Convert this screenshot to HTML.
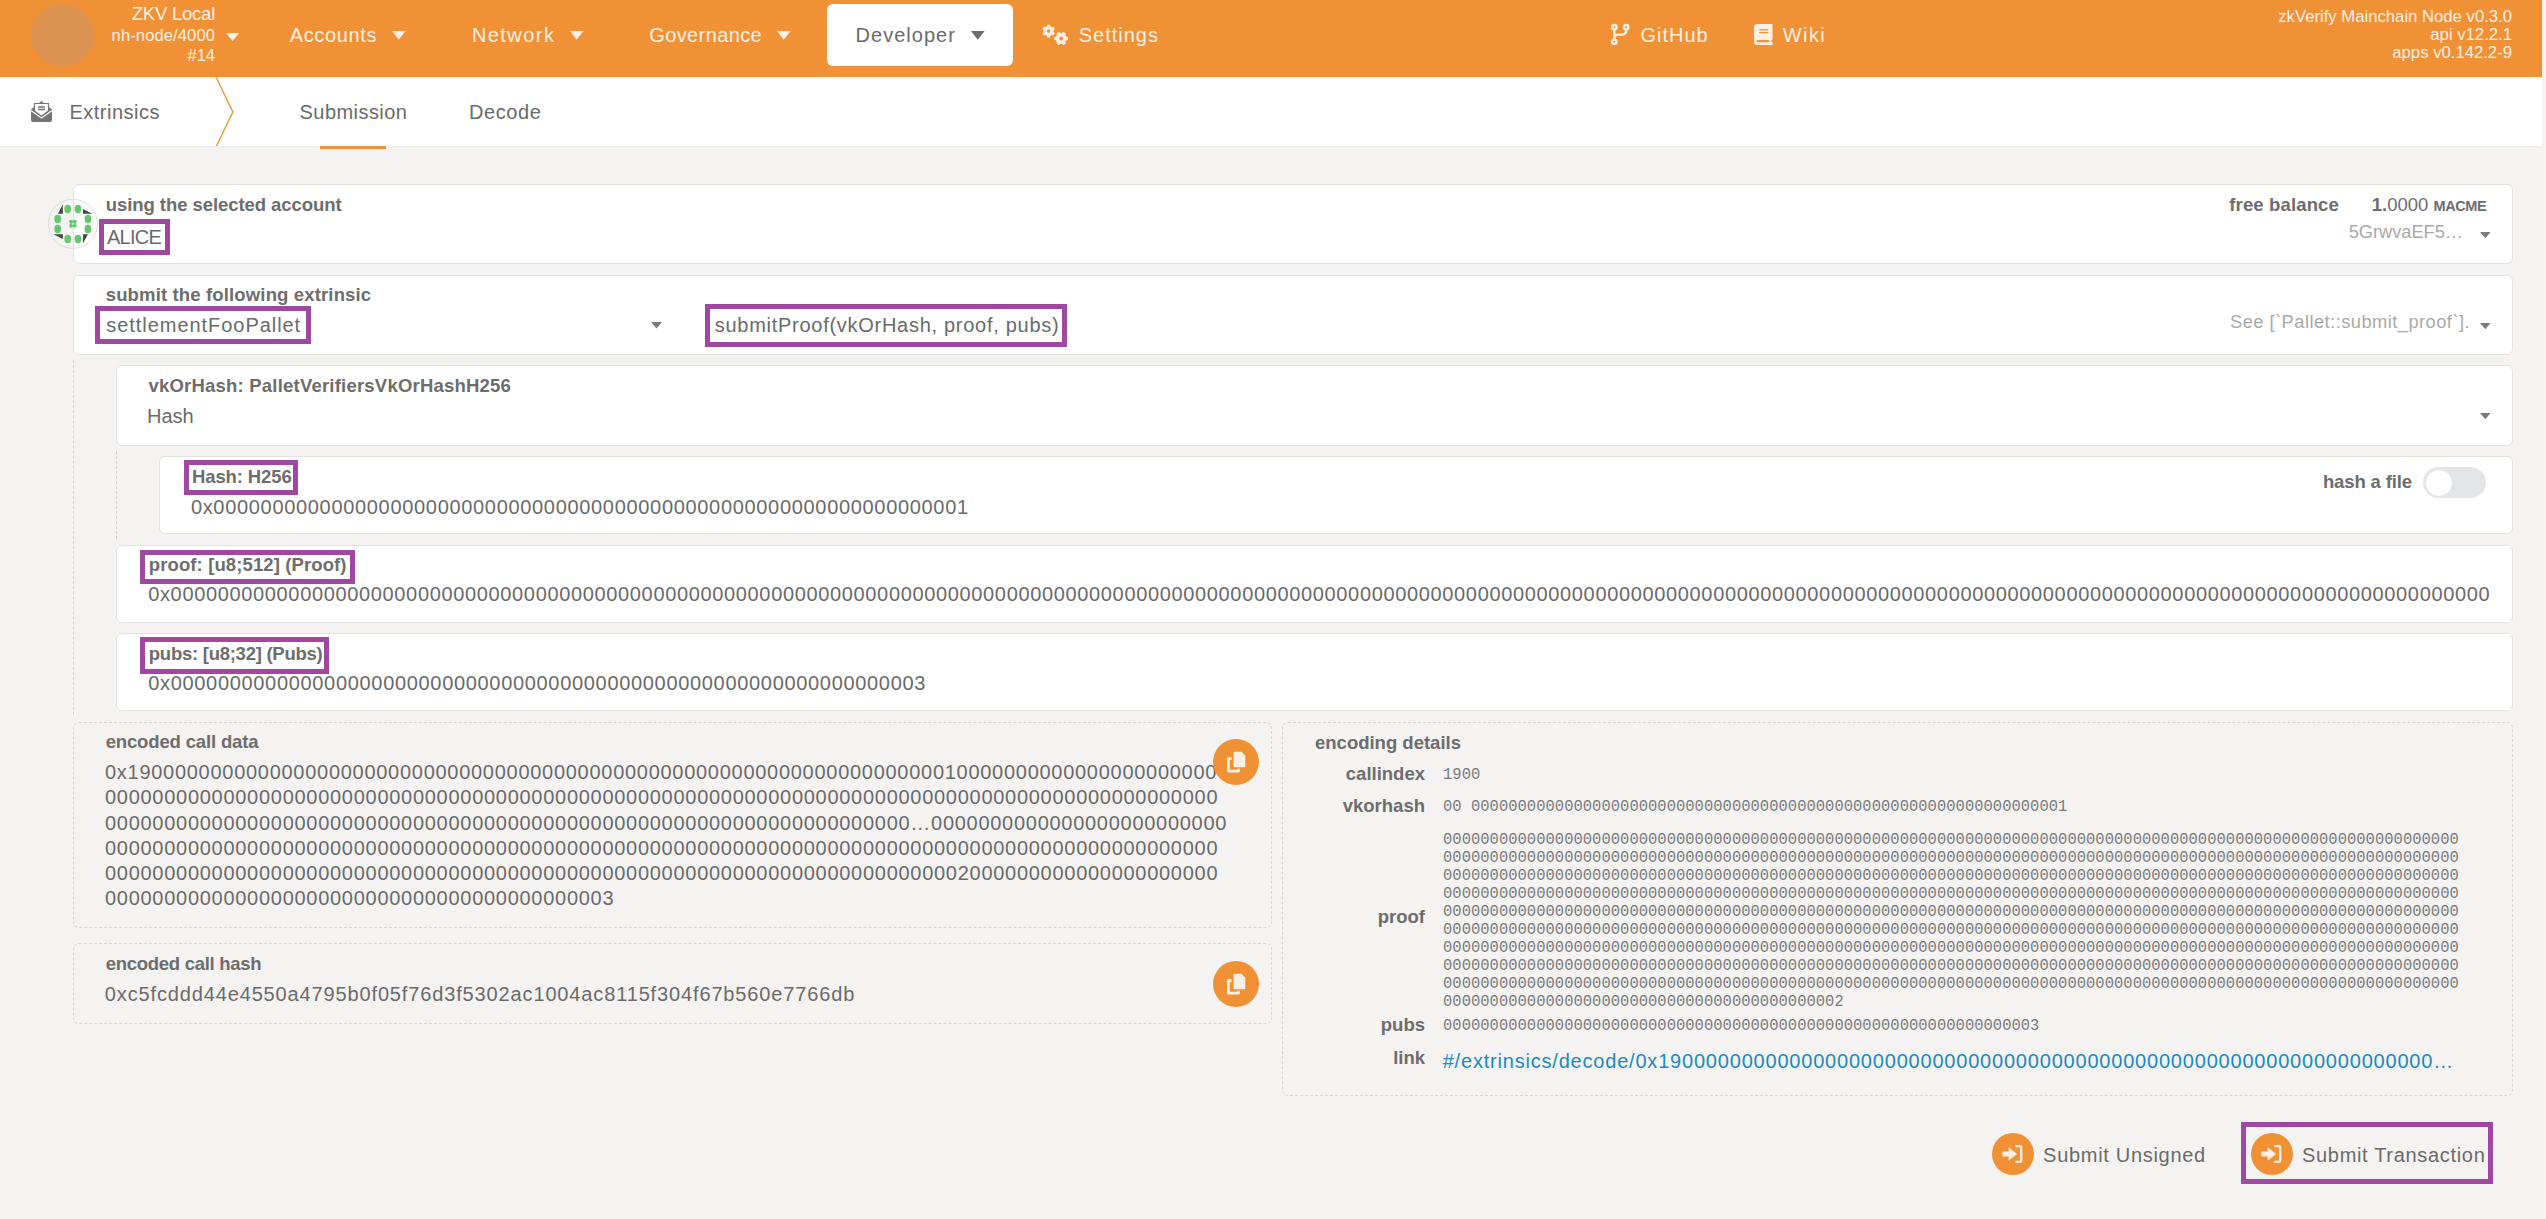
<!DOCTYPE html>
<html><head><meta charset="utf-8"><title>Extrinsics</title><style>
html,body{margin:0;padding:0}
body{width:2546px;height:1219px;position:relative;overflow:hidden;background:#f4f3f2;font-family:"Liberation Sans",sans-serif}
.t{position:absolute;white-space:pre;line-height:1}
</style></head><body>
<div style="position:absolute;left:0px;top:0px;width:2542px;height:77px;box-sizing:border-box;background:#f09135"></div>
<div style="position:absolute;left:2542px;top:0px;width:4px;height:1219px;box-sizing:border-box;background:#f4f3f2"></div>
<div style="position:absolute;left:31px;top:4px;width:63px;height:63px;box-sizing:border-box;background:#dd9453;border-radius:50%"></div>
<div class="t" style="right:2331.00px;top:5.24px;font-size:18.5px;color:#fdefe3;font-weight:400;letter-spacing:-0.24px;font-family:'Liberation Sans',sans-serif;">ZKV Local</div>
<div class="t" style="right:2331.00px;top:26.93px;font-size:16.5px;color:#fdefe3;font-weight:400;letter-spacing:0.13px;font-family:'Liberation Sans',sans-serif;">nh-node/4000</div>
<div class="t" style="right:2331.00px;top:46.93px;font-size:16.5px;color:#fdefe3;font-weight:400;font-family:'Liberation Sans',sans-serif;">#14</div>
<svg style="position:absolute;left:224.8px;top:31.9px" width="15.2" height="10" viewBox="224.8 31.9 15.2 10"><polygon points="225.8,32.9 239.0,32.9 232.4,40.9" fill="#fdefe3"/></svg>
<div class="t" style="left:289.70px;top:24.57px;font-size:20px;color:#fdefe3;font-weight:400;letter-spacing:0.64px;font-family:'Liberation Sans',sans-serif;">Accounts</div>
<svg style="position:absolute;left:390.5px;top:30.4px" width="15.5" height="10.8" viewBox="390.5 30.4 15.5 10.8"><polygon points="391.5,31.4 405.0,31.4 398.25,40.2" fill="#fdefe3"/></svg>
<div class="t" style="left:471.90px;top:24.57px;font-size:20px;color:#fdefe3;font-weight:400;letter-spacing:1.45px;font-family:'Liberation Sans',sans-serif;">Network</div>
<svg style="position:absolute;left:568.5px;top:30.4px" width="15.5" height="10.8" viewBox="568.5 30.4 15.5 10.8"><polygon points="569.5,31.4 583.0,31.4 576.25,40.2" fill="#fdefe3"/></svg>
<div class="t" style="left:649.30px;top:24.57px;font-size:20px;color:#fdefe3;font-weight:400;letter-spacing:0.38px;font-family:'Liberation Sans',sans-serif;">Governance</div>
<svg style="position:absolute;left:776px;top:30.4px" width="15.5" height="10.8" viewBox="776 30.4 15.5 10.8"><polygon points="777,31.4 790.5,31.4 783.75,40.2" fill="#fdefe3"/></svg>
<div style="position:absolute;left:827px;top:4px;width:186px;height:62px;box-sizing:border-box;background:#fff;border-radius:6px"></div>
<div class="t" style="left:855.60px;top:24.57px;font-size:20px;color:#6a6a6a;font-weight:400;letter-spacing:1.02px;font-family:'Liberation Sans',sans-serif;">Developer</div>
<svg style="position:absolute;left:969.8px;top:30.4px" width="15.6" height="10.8" viewBox="969.8 30.4 15.6 10.8"><polygon points="970.8,31.4 984.4,31.4 977.5999999999999,40.2" fill="#6b6b6b"/></svg>
<svg style="position:absolute;left:1036px;top:18px" width="40" height="32" viewBox="1036 18 40 32"><path fill-rule="evenodd" fill="#fdefe3" d="M1046.10 26.77 L1046.97 26.37 L1047.23 24.64 L1049.97 24.64 L1050.23 26.37 L1051.10 26.77 L1051.88 27.33 L1053.50 26.68 L1054.88 29.06 L1053.51 30.15 L1053.60 31.10 L1053.51 32.05 L1054.88 33.14 L1053.50 35.52 L1051.88 34.87 L1051.10 35.43 L1050.23 35.83 L1049.97 37.56 L1047.23 37.56 L1046.97 35.83 L1046.10 35.43 L1045.32 34.87 L1043.70 35.52 L1042.32 33.14 L1043.69 32.05 L1043.60 31.10 L1043.69 30.15 L1042.32 29.06 L1043.70 26.68 L1045.32 27.33Z M1050.40 31.10 A1.8 1.8 0 1 0 1046.80 31.10 A1.8 1.8 0 1 0 1050.40 31.10Z M1061.10 33.10 L1062.13 33.20 L1063.26 31.84 L1065.78 33.30 L1065.18 34.96 L1065.78 35.80 L1066.21 36.74 L1067.95 37.04 L1067.95 39.96 L1066.21 40.26 L1065.78 41.20 L1065.18 42.04 L1065.78 43.70 L1063.26 45.16 L1062.13 43.80 L1061.10 43.90 L1060.07 43.80 L1058.94 45.16 L1056.42 43.70 L1057.02 42.04 L1056.42 41.20 L1055.99 40.26 L1054.25 39.96 L1054.25 37.04 L1055.99 36.74 L1056.42 35.80 L1057.02 34.96 L1056.42 33.30 L1058.94 31.84 L1060.07 33.20Z M1063.00 38.50 A1.9 1.9 0 1 0 1059.20 38.50 A1.9 1.9 0 1 0 1063.00 38.50Z"/></svg>
<div class="t" style="left:1078.70px;top:24.57px;font-size:20px;color:#fdefe3;font-weight:400;letter-spacing:1.0px;font-family:'Liberation Sans',sans-serif;">Settings</div>
<svg style="position:absolute;left:1604px;top:18px" width="40" height="32" viewBox="1604 18 40 32"><g fill="none" stroke="#fdefe3" stroke-width="2.3"><circle cx="1614.4" cy="27.2" r="2.2"/><circle cx="1626.2" cy="27.2" r="2.2"/><circle cx="1614.4" cy="41.75" r="2.2"/><path d="M1614.4 29.5 V39.5 M1626.2 29.5 V30.5 Q1626.2 34.6 1621 34.6 H1619 Q1614.4 34.6 1614.4 38"/></g></svg>
<div class="t" style="left:1640.50px;top:24.57px;font-size:20px;color:#fdefe3;font-weight:400;letter-spacing:1.0px;font-family:'Liberation Sans',sans-serif;">GitHub</div>
<svg style="position:absolute;left:1746px;top:18px" width="40" height="32" viewBox="1746 18 40 32"><path fill="#fdefe3" d="M1757.5 23.9 H1772.5 V39.5 L1771.2 41.1 L1772.5 42.6 V44.9 H1757.5 A3.5 3.5 0 0 1 1754 41.4 V27.4 A3.5 3.5 0 0 1 1757.5 23.9Z"/><g stroke="#f09135" stroke-linecap="round"><path d="M1759.6 29.8 H1767.8 M1759.6 32.6 H1767.8" stroke-width="1.3"/><path d="M1757.6 41.1 H1768.2" stroke-width="2.3"/></g></svg>
<div class="t" style="left:1782.70px;top:24.57px;font-size:20px;color:#fdefe3;font-weight:400;letter-spacing:1.45px;font-family:'Liberation Sans',sans-serif;">Wiki</div>
<div class="t" style="right:34.00px;top:9.26px;font-size:16.7px;color:#fdefe3;font-weight:400;font-family:'Liberation Sans',sans-serif;">zkVerify Mainchain Node v0.3.0</div>
<div class="t" style="right:34.00px;top:27.06px;font-size:16.7px;color:#fdefe3;font-weight:400;font-family:'Liberation Sans',sans-serif;">api v12.2.1</div>
<div class="t" style="right:34.00px;top:45.06px;font-size:16.7px;color:#fdefe3;font-weight:400;font-family:'Liberation Sans',sans-serif;">apps v0.142.2-9</div>
<div style="position:absolute;left:0px;top:77px;width:2542px;height:69px;box-sizing:border-box;background:#fff"></div>
<svg style="position:absolute;left:31px;top:101px" width="21" height="21" viewBox="31 101 21 21"><path d="M10.5 0 L13 2 H18 V6 L21 8.5 V19 A2 2 0 0 1 19 21 H2 A2 2 0 0 1 0 19 V8.5 L3 6 V2 H8Z" fill="#747474" transform="translate(31 101)"/><path d="M4 3 H17 V9.5 L10.5 14.5 L4 9.5Z" fill="#fff" transform="translate(31 101)"/><path d="M0 9.5 L10.5 17 L21 9.5" fill="none" stroke="#fff" stroke-width="1.2" transform="translate(31 101)"/><path d="M7 6 H14 M7 8.5 H14" stroke="#747474" stroke-width="1.3" transform="translate(31 101)"/></svg>
<div class="t" style="left:69.40px;top:102.17px;font-size:20px;color:#6a6a6a;font-weight:400;letter-spacing:0.5px;font-family:'Liberation Sans',sans-serif;">Extrinsics</div>
<svg style="position:absolute;left:212px;top:77px" width="24" height="70" viewBox="212 77 24 70"><polyline points="216,77 232.8,112 216,147" fill="none" stroke="#f09135" stroke-width="1.3"/></svg>
<div class="t" style="left:299.60px;top:102.17px;font-size:20px;color:#6a6a6a;font-weight:400;letter-spacing:0.44px;font-family:'Liberation Sans',sans-serif;">Submission</div>
<div style="position:absolute;left:0px;top:146px;width:2542px;height:1px;box-sizing:border-box;background:#efeeed"></div>
<div style="position:absolute;left:320px;top:146px;width:66px;height:3px;box-sizing:border-box;background:#f09135"></div>
<div class="t" style="left:469.00px;top:102.17px;font-size:20px;color:#6a6a6a;font-weight:400;letter-spacing:0.58px;font-family:'Liberation Sans',sans-serif;">Decode</div>
<div style="position:absolute;left:73px;top:184px;width:2440px;height:80px;box-sizing:border-box;background:#fff;border:1px solid #e3e2e1;border-radius:6px"></div>
<div style="position:absolute;left:73px;top:275px;width:2440px;height:80px;box-sizing:border-box;background:#fff;border:1px solid #e3e2e1;border-radius:6px"></div>
<div style="position:absolute;left:73px;top:360px;width:1px;height:355px;box-sizing:border-box;border-left:1px dashed #d6d5d4"></div>
<div style="position:absolute;left:116px;top:365px;width:2397px;height:81px;box-sizing:border-box;background:#fff;border:1px solid #e3e2e1;border-radius:6px"></div>
<div style="position:absolute;left:116px;top:451px;width:1px;height:88px;box-sizing:border-box;border-left:1px dashed #d6d5d4"></div>
<div style="position:absolute;left:159px;top:456px;width:2354px;height:78px;box-sizing:border-box;background:#fff;border:1px solid #e3e2e1;border-radius:6px"></div>
<div style="position:absolute;left:116px;top:545px;width:2397px;height:78px;box-sizing:border-box;background:#fff;border:1px solid #e3e2e1;border-radius:6px"></div>
<div style="position:absolute;left:116px;top:633px;width:2397px;height:78px;box-sizing:border-box;background:#fff;border:1px solid #e3e2e1;border-radius:6px"></div>
<div class="t" style="left:105.70px;top:195.54px;font-size:18.5px;color:#6d6d6d;font-weight:700;letter-spacing:-0.06px;font-family:'Liberation Sans',sans-serif;">using the selected account</div>
<div class="t" style="left:107.00px;top:227.27px;font-size:20px;color:#6a6a6a;font-weight:400;letter-spacing:-0.75px;font-family:'Liberation Sans',sans-serif;">ALICE</div>
<div class="t" style="right:207.00px;top:195.54px;font-size:18.5px;color:#6d6d6d;font-weight:700;letter-spacing:0.15px;font-family:'Liberation Sans',sans-serif;">free balance</div>
<div class="t" style="right:59.69999999999982px;top:195.54px;font-size:18.5px;color:#6d6d6d;letter-spacing:0px"><b>1.</b>0000 <b style="font-size:14.5px;letter-spacing:-0.4px">MACME</b></div>
<div class="t" style="right:83.00px;top:222.81px;font-size:18.3px;color:#a9a9a9;font-weight:400;letter-spacing:-0.05px;font-family:'Liberation Sans',sans-serif;">5GrwvaEF5…</div>
<svg style="position:absolute;left:2479.4px;top:230.8px" width="12.6" height="8.3" viewBox="2479.4 230.8 12.6 8.3"><polygon points="2480.4,231.8 2491.0,231.8 2485.7000000000003,238.10000000000002" fill="#7b7b7b"/></svg>
<div class="t" style="left:105.70px;top:286.14px;font-size:18.5px;color:#6d6d6d;font-weight:700;letter-spacing:0.15px;font-family:'Liberation Sans',sans-serif;">submit the following extrinsic</div>
<div class="t" style="left:106.30px;top:314.87px;font-size:20px;color:#6a6a6a;font-weight:400;letter-spacing:0.95px;font-family:'Liberation Sans',sans-serif;">settlementFooPallet</div>
<svg style="position:absolute;left:650.2px;top:321.4px" width="13" height="8.6" viewBox="650.2 321.4 13 8.6"><polygon points="651.2,322.4 662.2,322.4 656.7,329.0" fill="#7b7b7b"/></svg>
<div class="t" style="left:714.80px;top:314.87px;font-size:20px;color:#6a6a6a;font-weight:400;letter-spacing:0.72px;font-family:'Liberation Sans',sans-serif;">submitProof(vkOrHash, proof, pubs)</div>
<div class="t" style="right:76.00px;top:313.11px;font-size:18.3px;color:#a9a9a9;font-weight:400;letter-spacing:0.46px;font-family:'Liberation Sans',sans-serif;">See [`Pallet::submit_proof`].</div>
<svg style="position:absolute;left:2479.4px;top:322px" width="12.6" height="8.3" viewBox="2479.4 322 12.6 8.3"><polygon points="2480.4,323 2491.0,323 2485.7000000000003,329.3" fill="#7b7b7b"/></svg>
<div class="t" style="left:148.50px;top:377.14px;font-size:18.5px;color:#6d6d6d;font-weight:700;letter-spacing:0.21px;font-family:'Liberation Sans',sans-serif;">vkOrHash: PalletVerifiersVkOrHashH256</div>
<div class="t" style="left:147.00px;top:405.67px;font-size:20px;color:#6a6a6a;font-weight:400;font-family:'Liberation Sans',sans-serif;">Hash</div>
<svg style="position:absolute;left:2479.4px;top:412px" width="12.6" height="8.3" viewBox="2479.4 412 12.6 8.3"><polygon points="2480.4,413 2491.0,413 2485.7000000000003,419.3" fill="#7b7b7b"/></svg>
<div class="t" style="left:192.00px;top:468.14px;font-size:18.5px;color:#6d6d6d;font-weight:700;letter-spacing:-0.12px;font-family:'Liberation Sans',sans-serif;">Hash: H256</div>
<div class="t" style="left:190.90px;top:496.87px;font-size:20px;color:#6a6a6a;font-weight:400;letter-spacing:0.68px;font-family:'Liberation Sans',sans-serif;">0x0000000000000000000000000000000000000000000000000000000000000001</div>
<div class="t" style="right:134.00px;top:473.24px;font-size:18.5px;color:#6d6d6d;font-weight:700;letter-spacing:-0.13px;font-family:'Liberation Sans',sans-serif;">hash a file</div>
<div style="position:absolute;left:2423px;top:467px;width:63px;height:31px;box-sizing:border-box;background:#e4e5e6;border-radius:16px"></div>
<div style="position:absolute;left:2424.5px;top:468.5px;width:28.5px;height:28.5px;box-sizing:border-box;background:#fff;border-radius:50%;border:1px solid #e2e3e4"></div>
<div class="t" style="left:148.80px;top:556.34px;font-size:18.5px;color:#6d6d6d;font-weight:700;letter-spacing:0.11px;font-family:'Liberation Sans',sans-serif;">proof: [u8;512] (Proof)</div>
<div class="t" style="left:148.20px;top:584.07px;font-size:20px;color:#6a6a6a;font-weight:400;letter-spacing:0.652px;font-family:'Liberation Sans',sans-serif;width:2345px;overflow:hidden">0x00000000000000000000000000000000000000000000000000000000000000000000000000000000000000000000000000000000000000000000000000000000000000000000000000000000000000000000000000000000000000000000000000000</div>
<div class="t" style="left:148.80px;top:645.34px;font-size:18.5px;color:#6d6d6d;font-weight:700;letter-spacing:-0.26px;font-family:'Liberation Sans',sans-serif;">pubs: [u8;32] (Pubs)</div>
<div class="t" style="left:148.20px;top:673.07px;font-size:20px;color:#6a6a6a;font-weight:400;letter-spacing:0.68px;font-family:'Liberation Sans',sans-serif;">0x0000000000000000000000000000000000000000000000000000000000000003</div>
<div style="position:absolute;left:73px;top:722px;width:1199px;height:206px;box-sizing:border-box;border:1px dashed #d6d5d4;border-radius:6px"></div>
<div class="t" style="left:105.70px;top:732.94px;font-size:18.5px;color:#6d6d6d;font-weight:700;letter-spacing:-0.15px;font-family:'Liberation Sans',sans-serif;">encoded call data</div>
<div class="t" style="left:105.00px;top:762.07px;font-size:20px;color:#6a6a6a;font-weight:400;letter-spacing:0.72px;font-family:'Liberation Sans',sans-serif;">0x19000000000000000000000000000000000000000000000000000000000000000000010000000000000000000000</div>
<div class="t" style="left:105.00px;top:787.32px;font-size:20px;color:#6a6a6a;font-weight:400;letter-spacing:0.72px;font-family:'Liberation Sans',sans-serif;">0000000000000000000000000000000000000000000000000000000000000000000000000000000000000000000000</div>
<div class="t" style="left:105.00px;top:812.57px;font-size:20px;color:#6a6a6a;font-weight:400;letter-spacing:0.72px;font-family:'Liberation Sans',sans-serif;">00000000000000000000000000000000000000000000000000000000000000000000…0000000000000000000000000</div>
<div class="t" style="left:105.00px;top:837.82px;font-size:20px;color:#6a6a6a;font-weight:400;letter-spacing:0.72px;font-family:'Liberation Sans',sans-serif;">0000000000000000000000000000000000000000000000000000000000000000000000000000000000000000000000</div>
<div class="t" style="left:105.00px;top:863.07px;font-size:20px;color:#6a6a6a;font-weight:400;letter-spacing:0.72px;font-family:'Liberation Sans',sans-serif;">0000000000000000000000000000000000000000000000000000000000000000000000002000000000000000000000</div>
<div class="t" style="left:105.00px;top:888.32px;font-size:20px;color:#6a6a6a;font-weight:400;letter-spacing:0.72px;font-family:'Liberation Sans',sans-serif;">0000000000000000000000000000000000000000003</div>
<div style="position:absolute;left:1213.1px;top:738.8px;width:45.8px;height:46px;border-radius:50%;background:#f09135"></div>
<svg style="position:absolute;left:1222px;top:747.8px" width="28" height="28" viewBox="1222 747.8 28 28"><g transform="translate(0 0.0)"><path d="M1234.6 751.5 H1241.4 L1245.3 755.6 V766.1 A1 1 0 0 1 1244.3 767.1 H1234.6 A1 1 0 0 1 1233.6 766.1 V752.5 A1 1 0 0 1 1234.6 751.5Z" fill="#fdefe3"/><path d="M1231.7 758.4 H1228.4 V770.9 H1238.6 V768.6" fill="none" stroke="#fdefe3" stroke-width="2.8" stroke-linejoin="round"/></g></svg>
<div style="position:absolute;left:73px;top:943px;width:1199px;height:81px;box-sizing:border-box;border:1px dashed #d6d5d4;border-radius:6px"></div>
<div class="t" style="left:105.80px;top:955.14px;font-size:18.5px;color:#6d6d6d;font-weight:700;letter-spacing:-0.29px;font-family:'Liberation Sans',sans-serif;">encoded call hash</div>
<div class="t" style="left:104.80px;top:983.67px;font-size:20px;color:#6a6a6a;font-weight:400;letter-spacing:0.86px;font-family:'Liberation Sans',sans-serif;">0xc5fcddd44e4550a4795b0f05f76d3f5302ac1004ac8115f304f67b560e7766db</div>
<div style="position:absolute;left:1213.1px;top:960.8px;width:45.8px;height:46px;border-radius:50%;background:#f09135"></div>
<svg style="position:absolute;left:1222px;top:969.8px" width="28" height="28" viewBox="1222 969.8 28 28"><g transform="translate(0 222.0)"><path d="M1234.6 751.5 H1241.4 L1245.3 755.6 V766.1 A1 1 0 0 1 1244.3 767.1 H1234.6 A1 1 0 0 1 1233.6 766.1 V752.5 A1 1 0 0 1 1234.6 751.5Z" fill="#fdefe3"/><path d="M1231.7 758.4 H1228.4 V770.9 H1238.6 V768.6" fill="none" stroke="#fdefe3" stroke-width="2.8" stroke-linejoin="round"/></g></svg>
<div style="position:absolute;left:1282px;top:722px;width:1231px;height:374px;box-sizing:border-box;border:1px dashed #d6d5d4;border-radius:6px"></div>
<div class="t" style="left:1315.00px;top:733.94px;font-size:18.5px;color:#6d6d6d;font-weight:700;font-family:'Liberation Sans',sans-serif;">encoding details</div>
<div class="t" style="right:1121.00px;top:765.14px;font-size:18.5px;color:#6d6d6d;font-weight:700;font-family:'Liberation Sans',sans-serif;">callindex</div>
<div class="t" style="left:1442.70px;top:765.76px;font-size:17.4px;color:#7a7a7a;font-family:'Liberation Mono',monospace;transform:scaleX(0.8930);transform-origin:0 0">1900</div>
<div class="t" style="right:1121.00px;top:797.24px;font-size:18.5px;color:#6d6d6d;font-weight:700;font-family:'Liberation Sans',sans-serif;">vkorhash</div>
<div class="t" style="left:1442.70px;top:797.66px;font-size:17.4px;color:#7a7a7a;font-family:'Liberation Mono',monospace;transform:scaleX(0.8930);transform-origin:0 0">00 0000000000000000000000000000000000000000000000000000000000000001</div>
<div class="t" style="left:1442.70px;top:830.66px;font-size:17.4px;color:#7a7a7a;font-family:'Liberation Mono',monospace;transform:scaleX(0.8930);transform-origin:0 0">0000000000000000000000000000000000000000000000000000000000000000000000000000000000000000000000000000000000000</div>
<div class="t" style="left:1442.70px;top:848.66px;font-size:17.4px;color:#7a7a7a;font-family:'Liberation Mono',monospace;transform:scaleX(0.8930);transform-origin:0 0">0000000000000000000000000000000000000000000000000000000000000000000000000000000000000000000000000000000000000</div>
<div class="t" style="left:1442.70px;top:866.66px;font-size:17.4px;color:#7a7a7a;font-family:'Liberation Mono',monospace;transform:scaleX(0.8930);transform-origin:0 0">0000000000000000000000000000000000000000000000000000000000000000000000000000000000000000000000000000000000000</div>
<div class="t" style="left:1442.70px;top:884.66px;font-size:17.4px;color:#7a7a7a;font-family:'Liberation Mono',monospace;transform:scaleX(0.8930);transform-origin:0 0">0000000000000000000000000000000000000000000000000000000000000000000000000000000000000000000000000000000000000</div>
<div class="t" style="left:1442.70px;top:902.66px;font-size:17.4px;color:#7a7a7a;font-family:'Liberation Mono',monospace;transform:scaleX(0.8930);transform-origin:0 0">0000000000000000000000000000000000000000000000000000000000000000000000000000000000000000000000000000000000000</div>
<div class="t" style="left:1442.70px;top:920.66px;font-size:17.4px;color:#7a7a7a;font-family:'Liberation Mono',monospace;transform:scaleX(0.8930);transform-origin:0 0">0000000000000000000000000000000000000000000000000000000000000000000000000000000000000000000000000000000000000</div>
<div class="t" style="left:1442.70px;top:938.66px;font-size:17.4px;color:#7a7a7a;font-family:'Liberation Mono',monospace;transform:scaleX(0.8930);transform-origin:0 0">0000000000000000000000000000000000000000000000000000000000000000000000000000000000000000000000000000000000000</div>
<div class="t" style="left:1442.70px;top:956.66px;font-size:17.4px;color:#7a7a7a;font-family:'Liberation Mono',monospace;transform:scaleX(0.8930);transform-origin:0 0">0000000000000000000000000000000000000000000000000000000000000000000000000000000000000000000000000000000000000</div>
<div class="t" style="left:1442.70px;top:974.66px;font-size:17.4px;color:#7a7a7a;font-family:'Liberation Mono',monospace;transform:scaleX(0.8930);transform-origin:0 0">0000000000000000000000000000000000000000000000000000000000000000000000000000000000000000000000000000000000000</div>
<div class="t" style="left:1442.70px;top:992.66px;font-size:17.4px;color:#7a7a7a;font-family:'Liberation Mono',monospace;transform:scaleX(0.8930);transform-origin:0 0">0000000000000000000000000000000000000000002</div>
<div class="t" style="right:1121.00px;top:907.54px;font-size:18.5px;color:#6d6d6d;font-weight:700;font-family:'Liberation Sans',sans-serif;">proof</div>
<div class="t" style="right:1121.00px;top:1016.04px;font-size:18.5px;color:#6d6d6d;font-weight:700;font-family:'Liberation Sans',sans-serif;">pubs</div>
<div class="t" style="left:1442.70px;top:1016.86px;font-size:17.4px;color:#7a7a7a;font-family:'Liberation Mono',monospace;transform:scaleX(0.8930);transform-origin:0 0">0000000000000000000000000000000000000000000000000000000000000003</div>
<div class="t" style="right:1121.00px;top:1048.84px;font-size:18.5px;color:#6d6d6d;font-weight:700;font-family:'Liberation Sans',sans-serif;">link</div>
<div class="t" style="left:1442.70px;top:1050.67px;font-size:20px;color:#1b8ac0;font-weight:400;letter-spacing:0.8px;font-family:'Liberation Sans',sans-serif;">#/extrinsics/decode/0x19000000000000000000000000000000000000000000000000000000000000000…</div>
<div style="position:absolute;left:1992.0px;top:1133.0px;width:41.8px;height:41.8px;border-radius:50%;background:#f09135"></div>
<svg style="position:absolute;left:1998.9px;top:1139.9px" width="28" height="28" viewBox="1998.9 1139.9 28 28"><g transform="translate(2012.9 1153.9)"><path d="M-10.1 -2.4 H-4.3 V-5.9 Q-4.3 -6.8 -3.6 -6.1 L3.6 -0.5 Q4 0 3.6 0.5 L-3.6 6.1 Q-4.3 6.8 -4.3 5.9 V2.5 H-10.1 Q-10.6 2.5 -10.6 2 V-1.9 Q-10.6 -2.4 -10.1 -2.4Z" fill="#fdefe3"/><path d="M3.2 -7.9 H7 Q8.2 -7.9 8.2 -6.7 V6.7 Q8.2 7.9 7 7.9 H3.2" fill="none" stroke="#fdefe3" stroke-width="2.3" stroke-linecap="round"/></g></svg>
<div class="t" style="left:2043.10px;top:1144.97px;font-size:20px;color:#6a6a6a;font-weight:400;letter-spacing:0.7px;font-family:'Liberation Sans',sans-serif;">Submit Unsigned</div>
<div style="position:absolute;left:2251.0px;top:1133.0px;width:41.8px;height:41.8px;border-radius:50%;background:#f09135"></div>
<svg style="position:absolute;left:2257.9px;top:1139.9px" width="28" height="28" viewBox="2257.9 1139.9 28 28"><g transform="translate(2271.9 1153.9)"><path d="M-10.1 -2.4 H-4.3 V-5.9 Q-4.3 -6.8 -3.6 -6.1 L3.6 -0.5 Q4 0 3.6 0.5 L-3.6 6.1 Q-4.3 6.8 -4.3 5.9 V2.5 H-10.1 Q-10.6 2.5 -10.6 2 V-1.9 Q-10.6 -2.4 -10.1 -2.4Z" fill="#fdefe3"/><path d="M3.2 -7.9 H7 Q8.2 -7.9 8.2 -6.7 V6.7 Q8.2 7.9 7 7.9 H3.2" fill="none" stroke="#fdefe3" stroke-width="2.3" stroke-linecap="round"/></g></svg>
<div class="t" style="left:2302.00px;top:1144.97px;font-size:20px;color:#6a6a6a;font-weight:400;letter-spacing:0.68px;font-family:'Liberation Sans',sans-serif;">Submit Transaction</div>
<div style="position:absolute;left:99px;top:219px;width:71px;height:36px;box-sizing:border-box;border:5px solid #a047a1"></div>
<div style="position:absolute;left:95px;top:306px;width:216px;height:38px;box-sizing:border-box;border:5px solid #a047a1"></div>
<div style="position:absolute;left:705px;top:304px;width:362px;height:43px;box-sizing:border-box;border:5px solid #a047a1"></div>
<div style="position:absolute;left:184px;top:460px;width:114px;height:35px;box-sizing:border-box;border:5px solid #a047a1"></div>
<div style="position:absolute;left:140px;top:550px;width:215px;height:34px;box-sizing:border-box;border:5px solid #a047a1"></div>
<div style="position:absolute;left:140px;top:637px;width:189px;height:37px;box-sizing:border-box;border:5px solid #a047a1"></div>
<div style="position:absolute;left:2241px;top:1122px;width:252px;height:62px;box-sizing:border-box;border:5px solid #a047a1"></div>
<svg style="position:absolute;left:46px;top:197px" width="54" height="54" viewBox="46 197 54 54"><circle cx="72.9" cy="223.8" r="24.6" fill="none" stroke="#d9d9d9" stroke-width="0.9"/><rect x="64.40" y="204.80" width="6.6" height="8.2" rx="3.3" ry="3.6" fill="#62c86b"/><rect x="74.60" y="204.80" width="6.6" height="8.2" rx="3.3" ry="3.6" fill="#62c86b"/><rect x="54.40" y="214.80" width="6.6" height="8.2" rx="3.3" ry="3.6" fill="#62c86b"/><rect x="54.40" y="224.80" width="6.6" height="8.2" rx="3.3" ry="3.6" fill="#62c86b"/><rect x="84.60" y="214.80" width="6.6" height="8.2" rx="3.3" ry="3.6" fill="#62c86b"/><rect x="84.60" y="224.80" width="6.6" height="8.2" rx="3.3" ry="3.6" fill="#62c86b"/><rect x="64.40" y="234.80" width="6.6" height="8.2" rx="3.3" ry="3.6" fill="#62c86b"/><rect x="74.60" y="234.80" width="6.6" height="8.2" rx="3.3" ry="3.6" fill="#62c86b"/><circle cx="71" cy="221.6" r="1.9" fill="#62c86b"/><circle cx="74.8" cy="221.6" r="1.9" fill="#62c86b"/><circle cx="71" cy="225.8" r="1.9" fill="#62c86b"/><circle cx="74.8" cy="225.8" r="1.9" fill="#62c86b"/><rect x="70.95" y="221.75" width="3.9" height="3.9" rx="0.6" fill="none" stroke="#62c86b" stroke-width="1.5"/><polygon points="62.8,204.3 62.8,213.8 58,213.8" fill="#454545"/><polygon points="83,209 83,213.8 92.3,213.8" fill="#454545"/><polygon points="53.5,234.2 62.8,234.2 62.8,238.9" fill="#454545"/><polygon points="83,234.2 87.9,234.2 83,243.3" fill="#454545"/></svg>
</body></html>
